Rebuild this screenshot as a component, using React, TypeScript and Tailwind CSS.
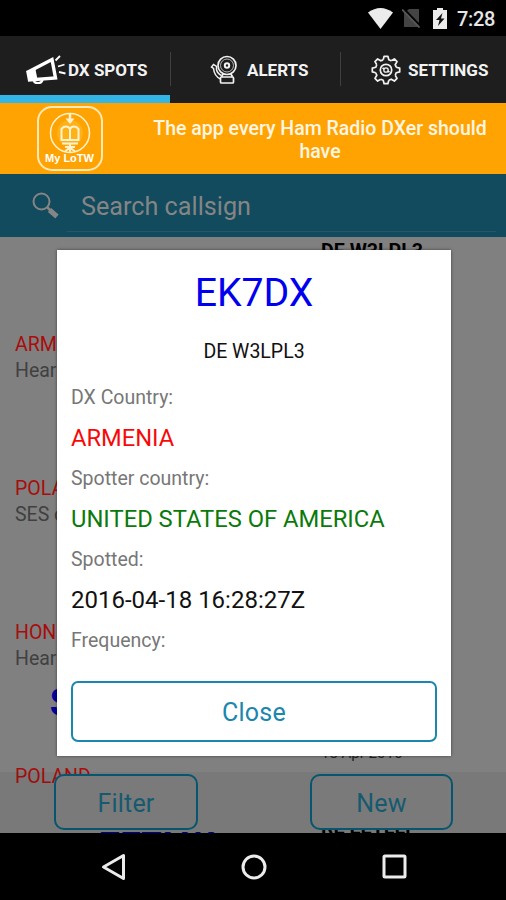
import type { ReactNode } from "react";

type Spot = { call: string; country: string; note: string; de: string; date: string };

const spots: Spot[] = [
  { call: "EK7DX", country: "ARMENIA", note: "Heard in USA", de: "DE W3LPL3", date: "18 Apr 2016" },
  { call: "SN0WFF", country: "POLAND", note: "SES op", de: "DE W3LPL3", date: "18 Apr 2016" },
  { call: "VR2XAN", country: "HONG KONG", note: "Heard in USA", de: "DE W3LPL3", date: "18 Apr 2016" },
  { call: "SN1050CHP", country: "POLAND", note: "", de: "DE W3LPL3", date: "18 Apr 2016" },
  { call: "EF7LW", country: "", note: "", de: "RE EETLLI", date: "" },
];

function Megaphone() {
  return (
    <svg className="h-[30px] w-[42px]" viewBox="0 0 42 30" fill="none" stroke="#fff">
      <path d="M3 18 27 5.500l3.500 18.500-26 2z" strokeWidth="3.400" />
      <path d="m1.500 17 3 10 8-1.500-2-10z" fill="#fff" stroke="none" />
      <path d="M8.500 26c1 4 8 4.500 9-.8" strokeWidth="2.400" />
      <path d="m30.500 6.500 4.500-4.500M33 12.500l6.500-2M34 18l6.500 1.500" strokeWidth="1.800" />
    </svg>
  );
}

function Bell() {
  return (
    <svg className="h-[30px] w-[30px]" viewBox="0 0 30 30" fill="none" stroke="#f2f2f2" strokeWidth="1.700">
      <circle cx="18" cy="10.500" r="9" />
      <circle cx="18" cy="10.500" r="6.500" strokeWidth=".7" />
      <circle cx="18" cy="10.500" r="2.200" strokeWidth="2" />
      <path d="m14 19-1.500 3M22 19l1.500 3" />
      <rect x="11.500" y="22" width="13" height="6" rx="1" />
      <path d="M11.500 24C7 22 5 18 4.500 13.500l-2-1.500 2-2.500 3 2v3c.5 2.500 2 4.500 5 6" strokeWidth="1.500" />
    </svg>
  );
}

function Gear() {
  const tooth = "M12.200 4.800 13.100 1.300h3.800l.9 3.500a10.600 10.600 0 0 1 2.400 1";
  return (
    <svg className="h-[30px] w-[30px]" viewBox="0 0 30 30" fill="none" stroke="#f2f2f2" strokeWidth="1.700" strokeLinejoin="round">
      {[0, 45, 90, 135, 180, 225, 270, 315].map((angle) => (
        <path key={angle} d={tooth} transform={`rotate(${angle} 15 15)`} />
      ))}
      <circle cx="15" cy="15" r="5.700" />
      <circle cx="15" cy="15" r="2.200" strokeWidth="1.300" />
      <path d="m11.500 13 2 1M18.500 17l-2-1" />
    </svg>
  );
}

function StatusBar() {
  return (
    <div className="flex h-9 shrink-0 items-center justify-end bg-black pr-[11px]">
      <svg className="mr-[9px] h-[21px] w-[25px]" viewBox="0 0 25 21">
        <path d="M0 4.500Q12.500-4.500 25 4.500L12.500 21z" fill="#ececec" />
      </svg>
      <svg className="mr-[13px] h-[20px] w-[18px]" viewBox="0 0 18 20">
        <path d="M7 1h10v18H2V5z" fill="#444" />
        <path d="m1 0 18 18.500" stroke="#000" strokeWidth="2" />
        <path d="m0 1.500 17.500 18" stroke="#555" strokeWidth="1.800" />
      </svg>
      <svg className="mr-[10px] h-[21px] w-[14px]" viewBox="0 0 14 21">
        <path d="M4 0h6v2h4v19H0V2h4z" fill="#ececec" />
        <path d="m9.500 5-6.500 7h3.500L5 18l6.500-7.500H8z" fill="#111" />
      </svg>
      <span className="w-[38px] pt-[2px] text-[20px] font-medium tracking-[-0.3px] text-[#e6e6e6]">7:28</span>
    </div>
  );
}

function Tab({ icon, label, className }: { icon: ReactNode; label: string; className: string }) {
  return (
    <div className={`flex h-full items-center ${className}`}>
      {icon}
      <span className="whitespace-nowrap pt-[2px] text-[17px] font-bold leading-none text-[#f3f3f3]">{label}</span>
    </div>
  );
}

function Tabs() {
  return (
    <div className="flex h-[67px] shrink-0 bg-[#1e1e1e]">
      <div className="flex w-[170px] flex-col border-b-8 border-[#33b5e5]">
        <Tab icon={<Megaphone />} label="DX SPOTS" className="gap-[1px] pl-[25px] pt-[7px]" />
      </div>
      <div className="mt-4 h-[34px] w-px bg-[#404040]" />
      <div className="w-[169px]">
        <Tab icon={<Bell />} label="ALERTS" className="gap-[8px] pl-[38px]" />
      </div>
      <div className="mt-4 h-[34px] w-px bg-[#404040]" />
      <Tab icon={<Gear />} label="SETTINGS" className="gap-[7px] pl-[30px]" />
    </div>
  );
}

function Banner() {
  return (
    <div className="flex h-[71px] shrink-0 items-start bg-[#ffa302] text-[#fff6e4]">
      <div className="ml-[37px] mt-[3px] flex h-[65px] w-[66px] flex-col items-center rounded-[15px] border-2 border-[#ffe9b8] pr-px">
        <svg className="mt-[4px] h-[42px] w-[42px] shrink-0" viewBox="0 0 42 42" fill="none" stroke="#fff3cf" strokeWidth="1.500">
          <circle cx="21" cy="21" r="19.500" />
          <circle cx="21" cy="21" r="13" fill="#ffc22e" fillOpacity=".5" stroke="none" />
          <path d="M21 1v8" strokeWidth="2.500" />
          <path d="M16.500 6.500h9L21 12z" fill="#fff3cf" stroke="none" />
          <path d="M12.500 17v11h17V17l-2-2c-3-1-5.500 0-6.500 2-1-2-3.500-3-6.500-2zM21 17v11" strokeWidth="2" />
          <path d="M13 31.500h16M16 35h10M21 31v9M16 39.500l5-4 5 4" strokeWidth="2" />
        </svg>
        <span className="whitespace-nowrap font-['Liberation_Sans',sans-serif] text-[11px] font-bold leading-[9px] text-white">My LoTW</span>
      </div>
      <p className="ml-[47px] mt-[14px] w-[340px] text-center text-[19.500px] font-medium leading-[23px]">
        The app every Ham Radio DXer should have
      </p>
    </div>
  );
}

function Search() {
  return (
    <div className="flex h-[63px] shrink-0 items-start bg-[#124a5e]">
      <svg className="ml-[32px] mt-[18px] h-[27px] w-[28px]" viewBox="0 0 28 27" fill="none" stroke="#858585">
        <circle cx="9.500" cy="9.500" r="8" strokeWidth="2" />
        <path d="m15 15 4 4" strokeWidth="2.500" />
        <path d="m17.500 18 7.500 6.500" strokeWidth="5" />
      </svg>
      <div className="ml-[7px] mt-[10px] h-[48px] w-[429px] border-b border-[#25576a] pl-[14px] text-[25.200px] leading-[45px] text-[#858585]">
        Search callsign
      </div>
    </div>
  );
}

function Row({ spot }: { spot: Spot }) {
  return (
    <div className="flex h-36 shrink-0 pl-[15px]">
      <div className="w-[283px]">
        <div className="h-[94px] whitespace-nowrap pt-[12px] text-center text-[38px] font-bold leading-[44px] text-[#00009a]">
          {spot.call}
        </div>
        <div className="h-[26px] text-[19.500px] leading-[28px] text-[#a80d0d]">{spot.country}</div>
        <div className="text-[19.500px] leading-[28px] text-[#404040]">{spot.note}</div>
      </div>
      <div className="ml-[23px] text-black">
        <div className="h-[74px] whitespace-nowrap pt-px text-[19.600px] font-bold leading-[28px]">{spot.de}</div>
        <div className="text-[15px] leading-[20px] text-[#222]">{spot.date}</div>
      </div>
    </div>
  );
}

function OutlineButton({ children, className }: { children: string; className: string }) {
  return (
    <button className={`flex items-center justify-center border-2 pt-[2px] text-[25px] leading-none tracking-[0.2px] ${className}`}>
      {children}
    </button>
  );
}

function Field({ label, value, className }: { label: string; value: string; className: string }) {
  return (
    <div className="h-[81px]">
      <div className="h-[39px] text-[19.500px] leading-[24px] text-[#777]">{label}</div>
      <div className={`whitespace-nowrap leading-[26px] ${className}`}>{value}</div>
    </div>
  );
}

function SpotDialog() {
  return (
    <div className="absolute left-[57px] top-[250px] flex h-[506px] w-[394px] flex-col bg-white px-[14px] shadow-[0_0_3px_rgba(0,0,0,0.5)]">
      <h1 className="mt-[20px] text-center text-[39.200px] leading-[46px] text-[#0000ee]">EK7DX</h1>
      <div className="mt-[24px] text-center text-[19.500px] leading-[24px] text-[#111]">DE W3LPL3</div>
      <div className="mt-[22px]">
        <Field label="DX Country:" value="ARMENIA" className="text-[23.700px] text-[#f80808]" />
        <Field label="Spotter country:" value="UNITED STATES OF AMERICA" className="text-[23.750px] text-[#0a7a0a]" />
        <Field label="Spotted:" value="2016-04-18 16:28:27Z" className="text-[24px] text-[#111]" />
      </div>
      <div className="h-[52px] text-[19.500px] leading-[24px] text-[#777]">Frequency:</div>
      <OutlineButton className="h-[61px] w-full shrink-0 rounded-[7px] border-[#1b86ae] text-[#1b86ae]">Close</OutlineButton>
    </div>
  );
}

export default function App() {
  return (
    <div className="relative flex h-[900px] w-[506px] flex-col overflow-hidden bg-black font-[Roboto,sans-serif]">
      <StatusBar />
      <Tabs />
      <Banner />
      <Search />
      <div className="relative flex h-[596px] shrink-0 flex-col overflow-hidden bg-[#808080]">
        {spots.map((spot, i) => (
          <Row key={i} spot={spot} />
        ))}
        <div className="absolute inset-x-0 bottom-0 flex h-[61px] bg-black/5 pl-[54px] pt-[2px]">
          <OutlineButton className="h-[56px] w-[144px] rounded-[10px] border-[#075670] bg-[#7a7a7a] text-[#175a70]">Filter</OutlineButton>
          <OutlineButton className="ml-[112px] h-[56px] w-[143px] rounded-[10px] border-[#075670] bg-[#7a7a7a] text-[#175a70]">New</OutlineButton>
        </div>
      </div>
      <div className="flex h-[67px] shrink-0 items-center pl-[101px]">
        <svg className="h-[28px] w-[26px]" viewBox="0 0 26 28" fill="none" stroke="#ececec" strokeWidth="3">
          <path d="M2.500 14 22.500 2.500v23z" strokeLinejoin="round" />
        </svg>
        <svg className="ml-[114px] h-[26px] w-[26px]" viewBox="0 0 26 26" fill="none" stroke="#ececec" strokeWidth="3">
          <circle cx="13" cy="13" r="11" />
        </svg>
        <svg className="ml-[115px] h-[26px] w-[26px]" viewBox="0 0 26 26" fill="none" stroke="#ececec" strokeWidth="3">
          <rect x="2" y="2" width="21" height="21" rx="1" />
        </svg>
      </div>
      <SpotDialog />
    </div>
  );
}
